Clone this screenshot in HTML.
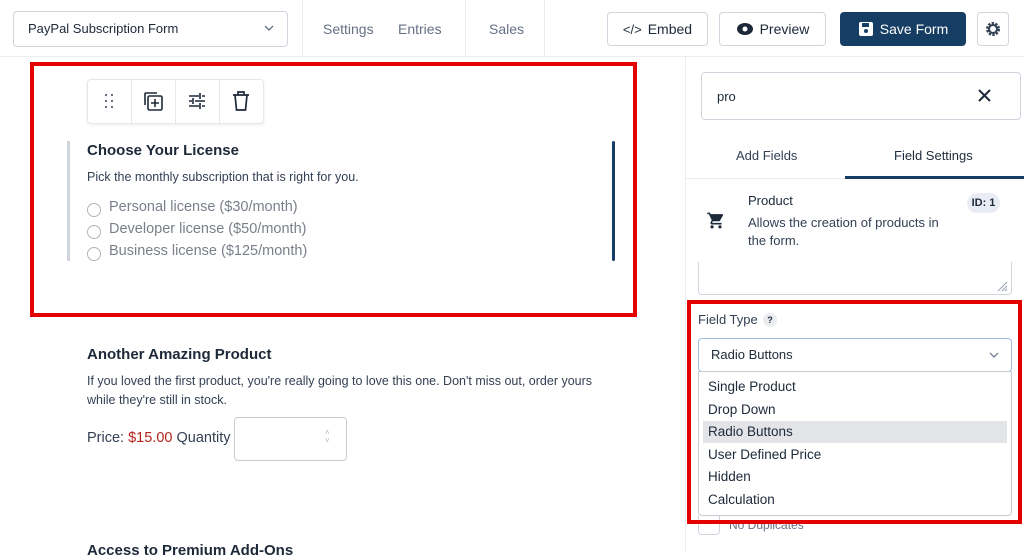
<!DOCTYPE html>
<html><head><meta charset="utf-8"><style>
*{box-sizing:border-box;margin:0;padding:0}
body{width:1024px;height:551px;overflow:hidden;background:#fff;font-family:"Liberation Sans",sans-serif;color:#1d2939;position:relative}
.a{position:absolute}
.btn{position:absolute;top:12px;height:34px;border:1px solid #d0d5dd;border-radius:4px;background:#fff;font-size:14px;display:flex;align-items:center;justify-content:center;gap:6px;color:#1d2939}
.t{position:absolute;white-space:nowrap}
</style></head><body>
<div class="a" style="left:0;top:0;width:1024px;height:57px;border-bottom:1px solid #eaecf0"></div>
<div class="a" style="left:13px;top:11px;width:275px;height:36px;border:1px solid #d0d5dd;border-radius:4px"></div>
<div class="t" style="left:28px;top:21px;font-size:13px;color:#1d2939">PayPal Subscription Form</div>
<svg class="a" style="left:263px;top:23px" width="12" height="10"><path d="M2 3l4 4 4-4" fill="none" stroke="#667085" stroke-width="1.3"/></svg>
<div class="a" style="left:302px;top:0;width:1px;height:57px;background:#eaecf0"></div>
<div class="a" style="left:465px;top:0;width:1px;height:57px;background:#eaecf0"></div>
<div class="a" style="left:544px;top:0;width:1px;height:57px;background:#eaecf0"></div>
<div class="t" style="left:323px;top:21px;font-size:14px;color:#667085">Settings</div>
<div class="t" style="left:398px;top:21px;font-size:14px;color:#667085">Entries</div>
<div class="t" style="left:489px;top:21px;font-size:14px;color:#667085">Sales</div>
<div class="btn" style="left:607px;width:101px"><span style="font-size:13px">&lt;/&gt;</span>Embed</div>
<div class="btn" style="left:719px;width:107px"><svg width="18" height="14"><ellipse cx="9" cy="7" rx="8" ry="6" fill="#1d2939"/><circle cx="9" cy="7" r="2.5" fill="#fff"/></svg>Preview</div>
<div class="btn" style="left:840px;width:126px;background:#163e64;border-color:#163e64;color:#fff"><svg width="16" height="16"><rect x="1" y="1" width="14" height="14" rx="2" fill="#fff"/><rect x="4" y="2" width="7" height="4" fill="#163e64"/><circle cx="8" cy="10" r="2" fill="#163e64"/></svg>Save Form</div>
<div class="btn" style="left:977px;width:32px"><svg width="16" height="16" viewBox="0 0 16 16"><circle cx="8" cy="8" r="5.5" fill="none" stroke="#344054" stroke-width="3" stroke-dasharray="2.2 1.3"/><circle cx="8" cy="8" r="4" fill="none" stroke="#344054" stroke-width="2"/></svg></div>
<div class="a" style="left:685px;top:57px;width:1px;height:494px;background:#eaecf0"></div>
<div class="a" style="left:701px;top:72px;width:320px;height:48px;border:1px solid #d0d5dd;border-radius:4px"></div>
<div class="t" style="left:717px;top:89px;font-size:13px">pro</div>
<svg class="a" style="left:978px;top:89px" width="13" height="13"><path d="M1 1l11 11M12 1L1 12" stroke="#1d2939" stroke-width="2"/></svg>
<div class="t" style="left:736px;top:148px;font-size:13px;color:#344054">Add Fields</div>
<div class="t" style="left:894px;top:148px;font-size:13px;color:#1d2939">Field Settings</div>
<div class="a" style="left:686px;top:178px;width:338px;height:1px;background:#eaecf0"></div>
<div class="a" style="left:845px;top:176px;width:179px;height:3px;background:#163e64"></div>
<div class="t" style="left:748px;top:193px;font-size:13px">Product</div>
<div class="a" style="left:967px;top:193px;width:33px;height:20px;background:#eaecf5;border-radius:10px;font-size:11px;font-weight:bold;text-align:center;line-height:20px">ID: 1</div>
<svg class="a" style="left:706px;top:211px" width="20" height="19" viewBox="0 0 24 24"><path d="M7 18a2 2 0 100 4 2 2 0 000-4zM1 2v2h2l3.6 7.6-1.4 2.4C5 14.4 5 15 5 15.5 5 16.3 5.7 17 6.5 17H19v-2H7.4a.25.25 0 01-.2-.4L8.1 13h7.4c.8 0 1.4-.4 1.7-1l3.6-6.5A1 1 0 0020 4H5.2l-.9-2H1zm16 16a2 2 0 100 4 2 2 0 000-4z" fill="#1d2939"/></svg>
<div class="t" style="left:748px;top:214px;font-size:13px;line-height:18px;color:#344054">Allows the creation of products in<br>the form.</div>
<div class="a" style="left:698px;top:262px;width:314px;height:33px;border:1px solid #d0d5dd;border-top:none;border-radius:0 0 4px 4px"></div>
<svg class="a" style="left:996px;top:280px" width="12" height="12"><path d="M11 2L2 11M11 6L6 11M11 9L9 11" stroke="#98a2b3"/></svg>
<div class="t" style="left:698px;top:312px;font-size:13px;color:#344054">Field Type</div>
<div class="a" style="left:763px;top:313px;width:14px;height:14px;border-radius:7px;background:#eaecf0;font-size:9px;text-align:center;line-height:14px;font-weight:bold">?</div>
<div class="a" style="left:698px;top:338px;width:314px;height:34px;border:1px solid #9fbfe0;border-radius:4px"></div>
<div class="t" style="left:711px;top:347px;font-size:13px">Radio Buttons</div>
<svg class="a" style="left:988px;top:350px" width="12" height="10"><path d="M2 3l4 4 4-4" fill="none" stroke="#667085" stroke-width="1.2"/></svg>
<div class="a" style="left:698px;top:371px;width:314px;height:145px;border:1px solid #c8ccd2;border-radius:0 0 4px 4px;background:#fff"></div>
<div class="a" style="left:703px;top:421px;width:304px;height:22px;background:#e3e4e8"></div>
<div class="t" style="left:708px;top:376px;font-size:13.5px;line-height:22.6px;color:#1d2939">Single Product<br>Drop Down<br>Radio Buttons<br>User Defined Price<br>Hidden<br>Calculation</div>
<div class="a" style="left:698px;top:516px;width:22px;height:19px;border:1px solid #d0d5dd;border-top:none;border-radius:0 0 4px 4px"></div>
<div class="t" style="left:729px;top:518px;font-size:12px;color:#667085">No Duplicates</div>
<div class="a" style="left:687px;top:300px;width:335px;height:224px;border:4px solid #e50000"></div>
<div class="a" style="left:87px;top:79px;width:177px;height:45px;border:1px solid #e4e7ec;border-radius:4px;box-shadow:0 1px 3px rgba(0,0,0,.08)"></div>
<div class="a" style="left:131px;top:79px;width:1px;height:45px;background:#e4e7ec"></div>
<div class="a" style="left:175px;top:79px;width:1px;height:45px;background:#e4e7ec"></div>
<div class="a" style="left:219px;top:79px;width:1px;height:45px;background:#e4e7ec"></div>
<svg class="a" style="left:104px;top:93px" width="10" height="16"><g fill="#344054"><circle cx="2" cy="2" r="1"/><circle cx="8" cy="2" r="1"/><circle cx="2" cy="8" r="1"/><circle cx="8" cy="8" r="1"/><circle cx="2" cy="14" r="1"/><circle cx="8" cy="14" r="1"/></g></svg>
<svg class="a" style="left:142px;top:90px" width="22" height="22" viewBox="0 0 22 22" fill="none" stroke="#1d2939" stroke-width="1.6"><path d="M3 15V4a1 1 0 011-1h11"/><rect x="6" y="6" width="14" height="14" rx="1.5"/><path d="M13 9v8M9 13h8"/></svg>
<svg class="a" style="left:187px;top:91px" width="20" height="20" fill="none" stroke="#1d2939" stroke-width="1.6"><path d="M2 5h10M15 5h3M13 2v6M2 10h3M8 10h10M6 7v6M2 15h10M15 15h3M13 12v6"/></svg>
<svg class="a" style="left:231px;top:90px" width="20" height="22" fill="none" stroke="#1d2939" stroke-width="1.7"><path d="M2 5h16M7 5V2h6v3M4 5l1.5 15h9L16 5"/></svg>
<div class="a" style="left:67px;top:141px;width:3px;height:120px;background:#d0d5dd"></div>
<div class="a" style="left:612px;top:141px;width:3px;height:120px;background:#163e64;border-radius:2px"></div>
<div class="t" style="left:87px;top:142px;font-size:15px;font-weight:bold;color:#1d2939">Choose Your License</div>
<div class="t" style="left:87px;top:170px;font-size:12.5px;color:#344054">Pick the monthly subscription that is right for you.</div>
<div class="a" style="left:87px;top:203px;width:14px;height:14px;border:1px solid #b0b5bd;border-radius:50%"></div>
<div class="a" style="left:87px;top:225px;width:14px;height:14px;border:1px solid #b0b5bd;border-radius:50%"></div>
<div class="a" style="left:87px;top:247px;width:14px;height:14px;border:1px solid #b0b5bd;border-radius:50%"></div>
<div class="t" style="left:109px;top:196px;font-size:14.5px;line-height:22px;color:#7a808a">Personal license ($30/month)<br>Developer license ($50/month)<br>Business license ($125/month)</div>
<div class="a" style="left:30px;top:62px;width:607px;height:255px;border:4px solid #e50000"></div>
<div class="t" style="left:87px;top:346px;font-size:15px;font-weight:bold">Another Amazing Product</div>
<div class="t" style="left:87px;top:372px;font-size:12.5px;line-height:19px;color:#344054">If you loved the first product, you're really going to love this one. Don't miss out, order yours<br>while they're still in stock.</div>
<div class="t" style="left:87px;top:430px;font-size:14.5px;color:#344054">Price: <span style="color:#b42318">$15.00</span> Quantity</div>
<div class="a" style="left:234px;top:417px;width:113px;height:44px;border:1px solid #c8ccd2;border-radius:4px"></div>
<div class="t" style="left:325px;top:429px;font-size:8px;color:#b0b5bd;line-height:8px">˄<br>˅</div>
<div class="t" style="left:87px;top:542px;font-size:15px;font-weight:bold">Access to Premium Add-Ons</div>
</body></html>
